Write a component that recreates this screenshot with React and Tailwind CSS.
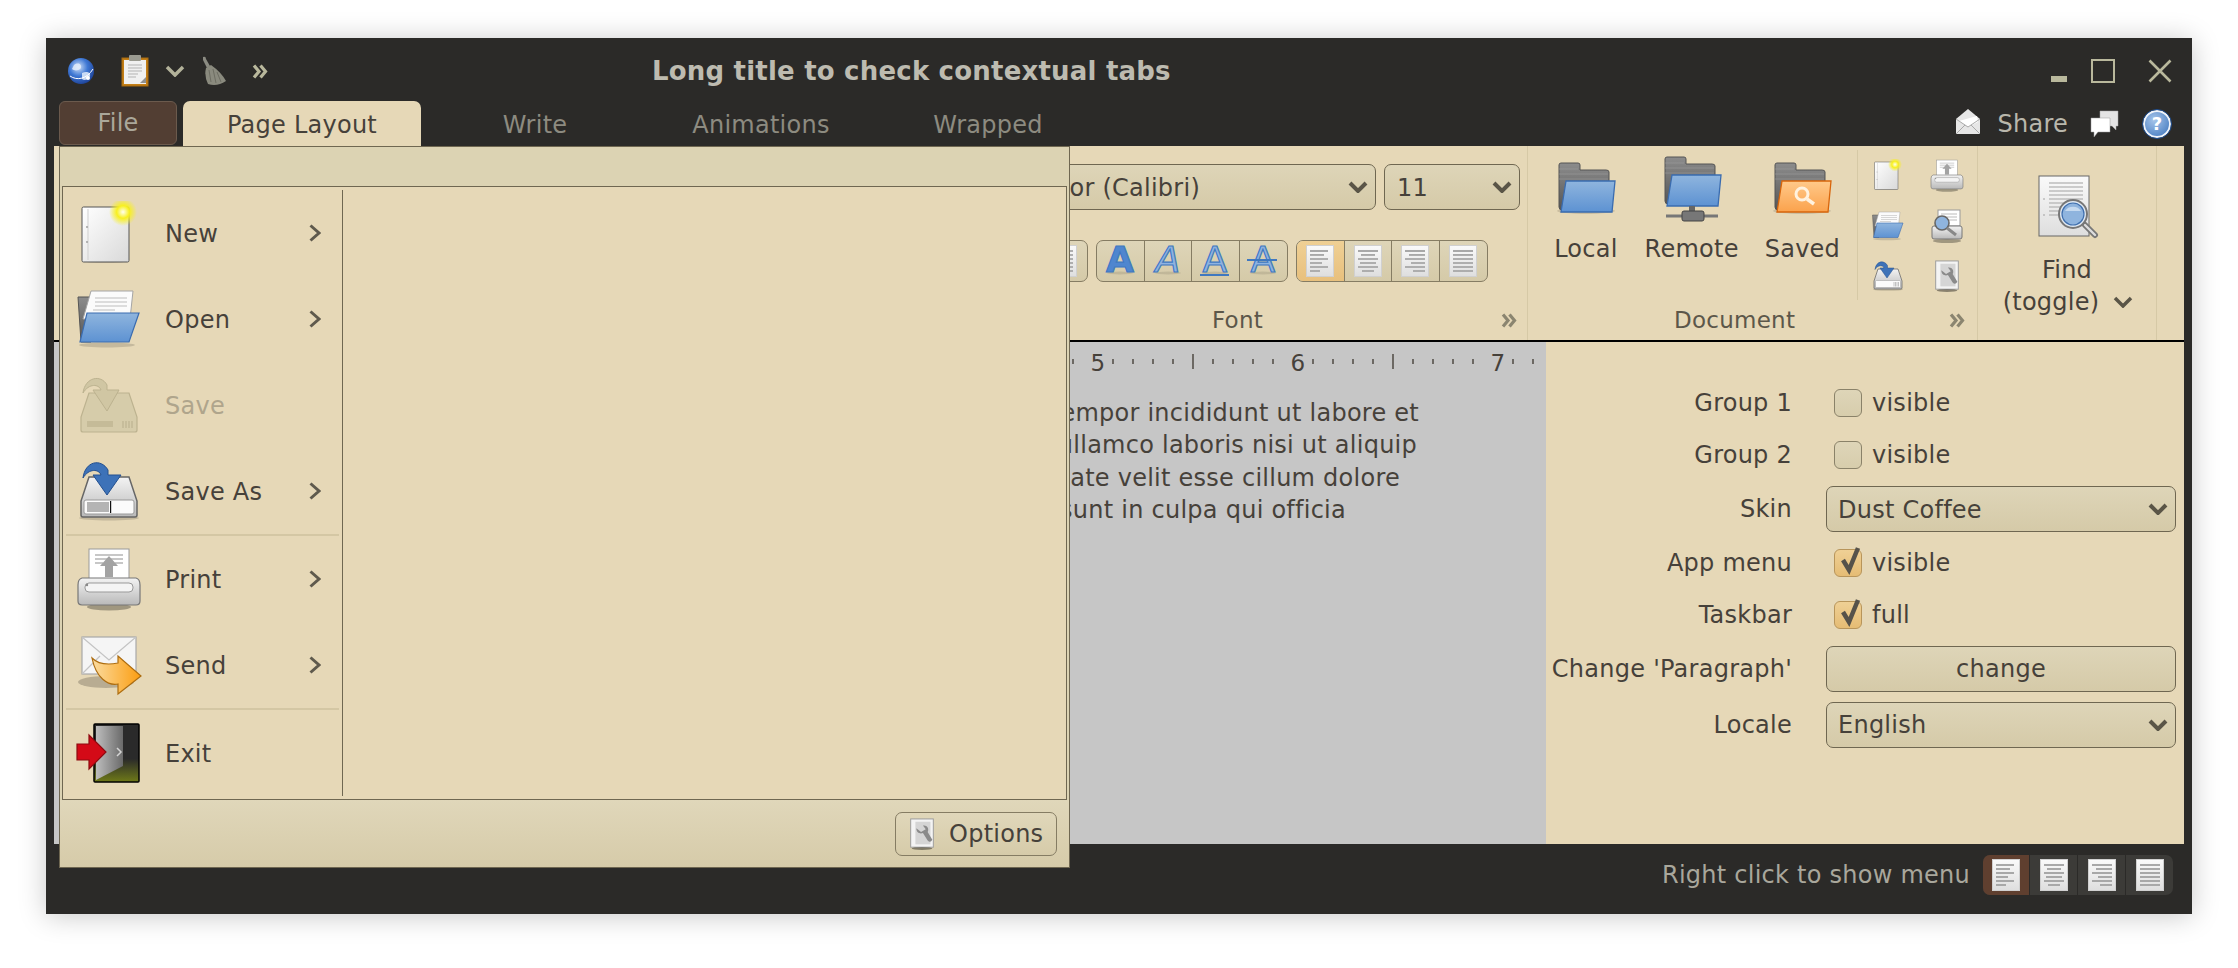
import React from 'react'

const DOC_LINES = [
  { text: 'tempor incididunt ut labore et', w: 'w-[1365px]' },
  { text: 'ullamco laboris nisi ut aliquip', w: 'w-[1363px]' },
  { text: 'voluptate velit esse cillum dolore', w: 'w-[1346px]' },
  { text: 'sunt in culpa qui officia', w: 'w-[1292px]' },
]

const Defs = () => (
  <svg width="0" height="0" className="absolute">
    <defs>
      <linearGradient id="paper" x1="0" y1="0" x2="1" y2="1">
        <stop offset="0" stopColor="#ffffff" />
        <stop offset="1" stopColor="#d9d9d9" />
      </linearGradient>
      <linearGradient id="paper2" x1="0" y1="0" x2="0" y2="1">
        <stop offset="0" stopColor="#fafafa" />
        <stop offset="1" stopColor="#dedede" />
      </linearGradient>
      <linearGradient id="blue" x1="0" y1="0" x2="0" y2="1">
        <stop offset="0" stopColor="#8fb5de" />
        <stop offset="1" stopColor="#5d92d2" />
      </linearGradient>
      <linearGradient id="grayf" x1="0" y1="0" x2="0" y2="1">
        <stop offset="0" stopColor="#8c8c8c" />
        <stop offset="1" stopColor="#555555" />
      </linearGradient>
      <linearGradient id="orange" x1="0" y1="0" x2="0" y2="1">
        <stop offset="0" stopColor="#ffc98a" />
        <stop offset="1" stopColor="#fba24c" />
      </linearGradient>
      <linearGradient id="arrowo" x1="0" y1="0" x2="1" y2="0">
        <stop offset="0" stopColor="#fbdca0" />
        <stop offset="1" stopColor="#fb9d10" />
      </linearGradient>
      <linearGradient id="driveg" x1="0" y1="0" x2="0" y2="1">
        <stop offset="0" stopColor="#f3f3f3" />
        <stop offset="1" stopColor="#b9b9b9" />
      </linearGradient>
      <linearGradient id="doorg" x1="0" y1="0" x2="1" y2="0">
        <stop offset="0" stopColor="#bdbdbd" />
        <stop offset="1" stopColor="#6a6a6a" />
      </linearGradient>
      <linearGradient id="floor" x1="0" y1="0" x2="0" y2="1">
        <stop offset="0.6" stopColor="#2a2a2a" />
        <stop offset="1" stopColor="#6f7a18" />
      </linearGradient>
      <radialGradient id="globe" cx="0.4" cy="0.35" r="0.7">
        <stop offset="0" stopColor="#cfe0f7" />
        <stop offset="0.5" stopColor="#3f78d4" />
        <stop offset="1" stopColor="#1c3f94" />
      </radialGradient>
      <radialGradient id="spark">
        <stop offset="0" stopColor="#fffff0" />
        <stop offset="0.45" stopColor="#f8f020" />
        <stop offset="1" stopColor="#f8f020" stopOpacity="0" />
      </radialGradient>
      <radialGradient id="helpb" cx="0.4" cy="0.35" r="0.8">
        <stop offset="0" stopColor="#a6c5ea" />
        <stop offset="1" stopColor="#3f76bd" />
      </radialGradient>
    </defs>
  </svg>
)

const Chevron = ({ className = 'w-5 h-3', color = '#5a5547', width = 4 }) => (
  <svg viewBox="0 0 20 12" className={className} fill="none">
    <path d="M2 2 L10 10 L18 2" stroke={color} strokeWidth={width} />
  </svg>
)

const Expand = ({ color = '#8b8570', className = 'w-[16px] h-[15px]' }) => (
  <svg viewBox="0 0 16 15" className={className} fill="none" stroke={color} strokeWidth="3.2">
    <path d="M2 1.5 L7 7.5 L2 13.5" />
    <path d="M8.5 1.5 L13.5 7.5 L8.5 13.5" />
  </svg>
)

const ChevronRight = () => (
  <svg viewBox="0 0 12 18" className="w-[12px] h-[18px]" fill="none">
    <path d="M1.5 1.5 L10 9 L1.5 16.5" stroke="#5f5a4d" strokeWidth="3" />
  </svg>
)

const NewIcon = ({ className = 'w-[64px] h-[64px]' }) => (
  <svg viewBox="0 0 64 64" className={className}>
    <ellipse cx="28" cy="60" rx="22" ry="2" fill="#000" opacity="0.12" />
    <rect x="5" y="6" width="47" height="55" rx="1.5" fill="url(#paper)" stroke="#555" strokeWidth="1" />
    <line x1="11" y1="8" x2="11" y2="59" stroke="#cfcfcf" />
    <circle cx="10" cy="26" r="0.9" fill="#999" />
    <circle cx="10" cy="41" r="0.9" fill="#999" />
    <circle cx="46" cy="11" r="14" fill="url(#spark)" />
  </svg>
)

const OpenIcon = ({ className = 'w-[68px] h-[60px]' }) => (
  <svg viewBox="0 0 68 60" className={className}>
    <ellipse cx="32" cy="56" rx="28" ry="2.5" fill="#000" opacity="0.14" />
    <path d="M3 8 H16 V53 H6 Z" fill="url(#grayf)" stroke="#555" />
    <path d="M16 2 H58 L55 30 H8 Z" fill="#fbfbfb" stroke="#a5a5a5" />
    <path d="M20 9 H52 M20 13 H52 M20 17 H52 M18 21 H40" stroke="#bdbdbd" strokeWidth="1.2" />
    <path d="M12 24 H64 L54 53 H5 Z" fill="url(#blue)" stroke="#3a6cb0" strokeWidth="1.2" />
  </svg>
)

const DriveIcon = ({ className = 'w-[64px] h-[60px]', disabled, detail }) => (
  <svg viewBox="0 0 64 60" className={className}>
    {disabled ? (
      <>
        <path d="M12 18 L4 42 V55 Q4 57 6 57 H58 Q60 57 60 55 V42 L52 18 Z" fill="#d6ccaa" stroke="#bcb28f" strokeWidth="1.2" />
        <rect x="10" y="46" width="26" height="6" fill="#c5bb98" />
        <path d="M46 46 V53 M49 46 V53 M52 46 V53 M55 46 V53" stroke="#b8ae8c" />
        <path d="M6 18 C8 2 24 -1 30 10 L30 15 H42 L30 36 L16 15 H24 C22 9 12 8 6 18 Z" fill="#d0c6a3" stroke="#bcb28f" />
      </>
    ) : (
      <>
        <ellipse cx="32" cy="57" rx="30" ry="2.5" fill="#000" opacity="0.15" />
        <path d="M12 16 L4 40 V54 Q4 56 6 56 H58 Q60 56 60 54 V40 L52 16 Z" fill="url(#driveg)" stroke="#666" strokeWidth="1.5" />
        <rect x="7" y="39" width="50" height="14" rx="2" fill="#fbfbfb" stroke="#999" />
        {detail ? (
          <>
            <rect x="10" y="41" width="22" height="10" fill="#b4b4b4" />
            <rect x="33" y="40" width="1.2" height="12" fill="#111" />
          </>
        ) : (
          <path d="M44 42 V51 M47 42 V51 M50 42 V51 M53 42 V51" stroke="#888" />
        )}
        <path d="M6 17 C8 0 24 -3 31 9 L31 14 H44 L30 34 L16 14 H24 C22 8 12 7 6 17 Z" fill="#3d72b8" stroke="#24508f" />
      </>
    )}
  </svg>
)

const PrintIcon = ({ className = 'w-[66px] h-[64px]' }) => (
  <svg viewBox="0 0 66 64" className={className}>
    <ellipse cx="33" cy="60" rx="22" ry="3.5" fill="#000" opacity="0.3" />
    <rect x="13" y="2" width="40" height="30" fill="#fff" stroke="#999" />
    <path d="M19 8 H47 M19 12 H47 M19 16 H27 M39 16 H47" stroke="#b5b5b5" strokeWidth="1.3" />
    <path d="M33 9 L42 19 H37 V30 H29 V19 H24 Z" fill="#a3a3a3" />
    <path d="M6 31 H60 Q64 32 64 38 V54 Q64 58 60 58 H6 Q2 58 2 54 V38 Q2 32 6 31 Z" fill="url(#driveg)" stroke="#777" strokeWidth="1.2" />
    <rect x="9" y="36" width="48" height="9" rx="4" fill="#f4f4f4" stroke="#999" />
    <circle cx="11" cy="38" r="1.2" fill="#888" />
  </svg>
)

const SendIcon = ({ className = 'w-[66px] h-[62px]' }) => (
  <svg viewBox="0 0 66 62" className={className}>
    <ellipse cx="30" cy="48" rx="28" ry="6" fill="#000" opacity="0.2" />
    <rect x="6" y="3" width="54" height="37" fill="#f5f5f5" stroke="#a8a8a8" strokeWidth="1.2" />
    <path d="M6 3 L33 26 L60 3 M6 40 L24 22 M60 40 L42 22" fill="none" stroke="#c4c4c4" strokeWidth="1.2" />
    <path d="M16 24 C22 30 32 31 42 29 V22 L65 42 L42 60 V50 C32 52 20 44 16 24 Z" fill="url(#arrowo)" stroke="#ad6d10" strokeWidth="1.2" />
  </svg>
)

const ExitIcon = () => (
  <svg viewBox="0 0 66 62" className="w-[66px] h-[62px]">
    <rect x="18" y="2" width="45" height="58" rx="1" fill="url(#floor)" stroke="#000" strokeWidth="1.5" />
    <path d="M20 4 H47 V44 L20 58 Z" fill="url(#doorg)" />
    <path d="M41 26 L45 30 L41 34" fill="none" stroke="#d5d5d5" strokeWidth="1.5" />
    <path d="M1 22 H13 V13 L30 30 L13 47 V38 H1 Z" fill="#d40a17" stroke="#8e0a10" strokeWidth="1.2" />
  </svg>
)

const FolderIcon = ({ front = 'url(#blue)', edge = '#3a6cb0', search }) => (
  <svg viewBox="0 0 64 56" className="w-[64px] h-[56px]">
    <ellipse cx="32" cy="51" rx="29" ry="3" fill="#000" opacity="0.12" />
    <path d="M5 5 Q5 3 7 3 H24 Q26 3 26 5 V10 H52 Q55 10 55 12 V50 H8 Q5 50 5 47 Z" fill="url(#grayf)" stroke="#555" />
    <path d="M5 9 H24 M5 14 H54 M5 19 H54" stroke="#a5a5a5" strokeWidth="0.8" opacity="0.6" />
    <path d="M12 21 H61 L58 52 H7 Z" fill={front} stroke={edge} strokeWidth="1.3" />
    {search && (
      <>
        <circle cx="32" cy="34" r="6" fill="none" stroke="#fff2df" strokeWidth="3" />
        <path d="M37 39 L44 44" stroke="#fff2df" strokeWidth="3.5" />
      </>
    )}
  </svg>
)

const RemoteIcon = () => (
  <svg viewBox="0 0 64 68" className="w-[64px] h-[68px]">
    <path d="M5 5 Q5 3 7 3 H24 Q26 3 26 5 V10 H52 Q55 10 55 12 V50 H8 Q5 50 5 47 Z" fill="url(#grayf)" stroke="#555" />
    <path d="M5 9 H24 M5 14 H54 M5 19 H54" stroke="#a5a5a5" strokeWidth="0.8" opacity="0.6" />
    <path d="M12 21 H61 L58 52 H7 Z" fill="url(#blue)" stroke="#3a6cb0" strokeWidth="1.3" />
    <rect x="29" y="52" width="6" height="7" fill="#666" />
    <path d="M6 62 H58" stroke="#777" strokeWidth="3" />
    <rect x="22" y="57" width="22" height="10" rx="2" fill="#777" stroke="#444" />
  </svg>
)

const FindIcon = () => (
  <svg viewBox="0 0 64 66" className="w-[64px] h-[66px]">
    <rect x="4" y="3" width="50" height="60" fill="url(#paper2)" stroke="#666" />
    <path d="M14 10 H48 M14 14 H48 M14 18 H48 M14 22 H48 M14 26 H48 M14 30 H36 M14 34 H32 M14 38 H30 M14 42 H30" stroke="#bdbdbd" strokeWidth="1.3" />
    <circle cx="9" cy="26" r="0.8" fill="#999" />
    <circle cx="9" cy="42" r="0.8" fill="#999" />
    <path d="M50 52 L60 62" stroke="#777" strokeWidth="6" strokeLinecap="round" />
    <path d="M50 52 L60 62" stroke="#ddd" strokeWidth="2.4" strokeLinecap="round" />
    <circle cx="38" cy="41" r="14" fill="#dfe8f2" stroke="#777" strokeWidth="2" />
    <circle cx="38" cy="41" r="11" fill="#8fb4de" stroke="#3f6fae" strokeWidth="1.2" />
    <path d="M30 38 A9 8 0 0 1 46 38 Z" fill="#c5d9ef" />
  </svg>
)

const PrintPreviewIcon = () => (
  <svg viewBox="0 0 34 34" className="w-[34px] h-[34px]">
    <ellipse cx="17" cy="32" rx="14" ry="2" fill="#000" opacity="0.3" />
    <rect x="8" y="1" width="22" height="16" fill="#fff" stroke="#999" />
    <path d="M11 5 H27 M11 8 H27 M11 11 H27" stroke="#bbb" />
    <rect x="2" y="17" width="30" height="13" rx="2" fill="url(#driveg)" stroke="#777" />
    <circle cx="12" cy="14" r="7" fill="#8fb4de" stroke="#666" strokeWidth="1.6" />
    <path d="M17 19 L26 26" stroke="#888" strokeWidth="3" />
  </svg>
)

const ToolsIcon = ({ className = 'w-[28px] h-[32px]' }) => (
  <svg viewBox="0 0 28 34" className={className}>
    <rect x="2" y="1" width="24" height="30" fill="#f4f4f4" stroke="#999" />
    <path d="M7 4 H23 V28 H7 Z" fill="#d5d5d5" />
    <path d="M8 11 C8 16 12 17 15 16 L20 24 Q23 27 25 23 L20 15 C22 11 19 7 15 8 L18 12 L13 15 Z" fill="#8a8a8a" />
    <ellipse cx="14" cy="32.5" rx="11" ry="1.5" fill="#000" opacity="0.4" />
  </svg>
)

const AlignDoc = ({ kind, className = 'w-[28px] h-[32px]' }) => {
  const rows = {
    left: [[4, 22], [4, 18], [4, 22], [4, 16], [4, 22], [4, 14]],
    center: [[4, 24], [7, 21], [4, 24], [6, 22], [4, 24], [8, 20]],
    right: [[4, 24], [8, 24], [4, 24], [10, 24], [4, 24], [12, 24]],
    justify: [[4, 24], [4, 24], [4, 24], [4, 24], [4, 24], [4, 24]],
  }[kind]
  return (
    <svg viewBox="0 0 28 32" className={className}>
      <rect x="0.5" y="0.5" width="27" height="31" fill="url(#paper2)" stroke="#d0d0d0" />
      {rows.map(([a, b], i) => (
        <line key={i} x1={a} x2={b} y1={6 + i * 4} y2={6 + i * 4} stroke="#a8a8a8" strokeWidth="1.8" />
      ))}
    </svg>
  )
}

const FontGlyph = ({ italic, underline, strike, bold }) => (
  <svg viewBox="0 0 36 34" className="w-[36px] h-[34px] overflow-visible">
    <ellipse cx="18" cy="29" rx="13" ry="1.5" fill="#000" opacity="0.1" />
    <text
      x="18"
      y="28"
      textAnchor="middle"
      fontSize="36"
      fontFamily="'DejaVu Sans', sans-serif"
      fontWeight={bold ? 700 : 400}
      fontStyle={italic ? 'italic' : 'normal'}
      fill={bold ? '#4f86cf' : '#8fb3e0'}
      stroke="#3f78c0"
      strokeWidth="1.2"
    >
      A
    </text>
    {underline && <rect x="3" y="30" width="29" height="2" fill="#3f78c0" />}
    {strike && <rect x="2" y="15" width="30" height="2" fill="#3f78c0" />}
  </svg>
)

const GlobeIcon = () => (
  <svg viewBox="0 0 28 28" className="w-[28px] h-[28px]">
    <circle cx="14" cy="14" r="13" fill="url(#globe)" />
    <path d="M7 8 C11 5 15 7 14 11 C12 14 7 14 5 12 Z M15 16 C19 14 24 15 23 19 C21 23 17 24 15 22 Z" fill="#e2ecfa" opacity="0.85" />
    <path d="M3 19 C10 24 20 22 26 12" fill="none" stroke="#fff" strokeWidth="1" />
    <circle cx="21" cy="21" r="2" fill="#fff" />
  </svg>
)

const ClipboardIcon = () => (
  <svg viewBox="0 0 28 32" className="w-[28px] h-[32px]">
    <rect x="1" y="3" width="26" height="28" fill="#c47f16" stroke="#a66a10" />
    <rect x="3" y="5" width="22" height="24" fill="#f0f0f0" />
    <rect x="8" y="0" width="12" height="6" rx="1" fill="#9a9a90" />
    <path d="M7 10 H21 M7 13 H21 M7 16 H21 M7 19 H17 M7 22 H15" stroke="#b3b3b3" />
    <path d="M19 28 L25 22 V28 Z" fill="#909090" />
  </svg>
)

const BroomIcon = () => (
  <svg viewBox="0 0 26 30" className="w-[26px] h-[30px]">
    <path d="M2 1 Q5 0 5 3 L9 10 L6 12 L2 4 Z" fill="#8b8b82" />
    <path d="M5 12 L10 9 Q20 16 25 25 Q16 31 7 28 Q3 20 5 12 Z" fill="#8a8a7e" />
    <path d="M8 14 L10 26 M12 13 L15 27 M16 16 L20 26" stroke="#6d6d62" />
  </svg>
)

const MailIcon = () => (
  <svg viewBox="0 0 26 28" className="w-[26px] h-[28px]">
    <path d="M1 11 L13 1 L25 11 V26 H1 Z" fill="#e6e6e6" />
    <path d="M4 13 L22 8 L23 14 L13 19 Z" fill="#fff" />
    <path d="M1 11 L13 19 L25 11 M1 26 L10 17 M25 26 L16 17" fill="none" stroke="#a9a9a9" />
  </svg>
)

const ChatIcon = () => (
  <svg viewBox="0 0 30 28" className="w-[30px] h-[28px]">
    <path d="M10 1 H28 V16 H26 L26 20 L22 16 H10 Z" fill="#e4e4e4" stroke="#aaa" strokeWidth="0.5" />
    <path d="M1 8 H20 V22 H8 L4 27 V22 H1 Z" fill="#fff" stroke="#999" strokeWidth="0.5" />
  </svg>
)

const HelpIcon = () => (
  <svg viewBox="0 0 30 30" className="w-[30px] h-[30px]">
    <circle cx="15" cy="15" r="13" fill="url(#helpb)" stroke="#f0f4fa" strokeWidth="2" />
    <circle cx="15" cy="15" r="14.5" fill="none" stroke="#1f4f92" />
    <text x="15" y="21" textAnchor="middle" fontSize="18" fontWeight="700" fontFamily="'DejaVu Sans', sans-serif" fill="#fff">?</text>
  </svg>
)

const Check = () => (
  <svg viewBox="0 0 24 30" className="absolute left-[3px] -top-[4px] w-[24px] h-[30px]" fill="none">
    <path d="M5 14 L11 24 L20 2" stroke="#56524a" strokeWidth="4.5" />
  </svg>
)

const Combo = ({ children, className = '' }) => (
  <div className={`flex items-center rounded-[7px] border border-[#6f6751] bg-gradient-to-b from-[#ded5b8] to-[#d5caa8] ${className}`}>
    {children}
  </div>
)

const MenuItem = ({ icon, label, arrow = true, disabled }) => (
  <div className="flex items-center h-[86px] pl-[11px] pr-[21px]">
    <div className="w-[70px] flex items-center justify-center shrink-0">{icon}</div>
    <span className={`ml-[21px] mt-[2px] flex-1 ${disabled ? 'text-[#afa58c]' : 'text-[#46413a]'}`}>{label}</span>
    {arrow && !disabled && <ChevronRight />}
  </div>
)

const Ruler = () => {
  const ticks = []
  for (let x = 19; x < 1492; x += 20) {
    const inch = (x + 1) % 200 === 40
    const major = (x + 1) % 200 === 140
    if (inch) continue
    ticks.push(<line key={x} x1={x} x2={x} y1={major ? 12 : 17} y2={major ? 27 : 22} stroke="#46413a" strokeWidth="1.4" />)
  }
  return (
    <svg width="1492" height="34" className="block shrink-0">
      {ticks}
      {[5, 6, 7].map((n) => (
        <text key={n} x={244 + (n - 1) * 200} y="29" textAnchor="middle" fontSize="23" fontFamily="'DejaVu Sans', sans-serif" fill="#46413a">
          {n}
        </text>
      ))}
    </svg>
  )
}

const FormLabel = ({ children }) => <div className="text-right pr-[34px] whitespace-nowrap">{children}</div>

const CheckRow = ({ checked, label }) => (
  <div className="flex items-center pl-[8px] h-[42px]">
    <div className={`relative w-[28px] h-[28px] rounded-[6px] border ${checked ? 'border-[#b8955a] bg-gradient-to-b from-[#efd095] to-[#e5bc74]' : 'border-[#8a8269] bg-gradient-to-b from-[#ded5b8] to-[#d7cdac]'}`}>
      {checked && <Check />}
    </div>
    <span className="ml-[10px]">{label}</span>
  </div>
)

export default function App() {
  return (
    <div className="relative w-[2238px] h-[968px] overflow-hidden bg-white font-['DejaVu_Sans',sans-serif] text-[24px] tracking-[0.25px] leading-[32px] text-[#46413a]">
      <Defs />
      <div className="absolute left-[46px] top-[38px] w-[2146px] h-[876px] flex flex-col bg-[#2b2a28] shadow-[0_2px_26px_rgba(0,0,0,0.22)]">
        {/* title bar */}
        <div className="flex items-center h-[60px] pt-[6px] shrink-0 text-[#c3c1b4]">
          <div className="flex items-center w-[240px] pl-[21px]">
            <GlobeIcon />
            <div className="ml-[26px]"><ClipboardIcon /></div>
            <div className="ml-[16px]"><Chevron color="#b3b29a" width={3.5} /></div>
            <div className="ml-[16px]"><BroomIcon /></div>
            <div className="ml-[25px]"><Expand color="#b9b89c" /></div>
          </div>
          <div className="ml-[366px] font-bold text-[#bdbbb0] whitespace-nowrap text-[26px] tracking-[0.2px]">Long title to check contextual tabs</div>
          <div className="flex-1" />
          <div className="w-[16px] h-[6px] mt-[16px] bg-[#b9b89c]" />
          <div className="ml-[24px] w-[24px] h-[24px] border-2 border-[#b9b89c]" />
          <svg viewBox="0 0 24 24" className="ml-[33px] mr-[20px] w-[24px] h-[24px]" fill="none" stroke="#b9b89c" strokeWidth="2.6">
            <path d="M1.5 1.5 L22.5 22.5 M22.5 1.5 L1.5 22.5" />
          </svg>
        </div>

        {/* tabs */}
        <div className="flex items-end h-[48px] shrink-0">
          <div className="ml-[13px] w-[118px] h-[44px] mb-[1px] rounded-[6px] border border-[#6b5a4d] bg-[#523e33] flex items-center justify-center text-[#aaa79a]">File</div>
          <div className="ml-[6px] w-[238px] h-[45px] pt-[2px] rounded-t-[7px] bg-[#e6d8b7] flex items-center justify-center text-[#46413a]">Page Layout</div>
          <div className="flex-1 flex items-center h-[45px] pt-[2px] text-[#8d8b80]">
            <span className="w-[228px] text-center">Write</span>
            <span className="w-[224px] text-center">Animations</span>
            <span className="w-[234px] text-center -ml-[2px]">Wrapped</span>
          </div>
          <div className="flex items-center h-[45px] mr-[20px]">
            <div className="-mt-[4px]"><MailIcon /></div>
            <span className="ml-[16px] text-[#b9b7ac]">Share</span>
            <div className="ml-[22px]"><ChatIcon /></div>
            <div className="ml-[22px]"><HelpIcon /></div>
          </div>
        </div>

        {/* ribbon */}
        <div className="mx-[8px] flex justify-end h-[196px] shrink-0 bg-[#e6d8b7] border-b-2 border-black pr-[27px]">
          <div className="flex-1 flex flex-col items-end border-r border-[#d6c9a6] pr-[7px]">
            <div className="flex gap-[8px] mt-[18px]">
              <Combo className="w-[400px] h-[46px] justify-end pr-[7px]">
                <span className="mr-[148px] mt-[1px] whitespace-nowrap">Minor (Calibri)</span>
                <Chevron />
              </Combo>
              <Combo className="w-[136px] h-[46px] justify-between pl-[12px] pr-[7px]">
                <span className="mt-[1px]">11</span>
                <Chevron />
              </Combo>
            </div>
            <div className="flex gap-[8px] mt-[30px] mr-[32px]">
              <div className="flex h-[42px] rounded-[7px] border border-[#857c63] bg-gradient-to-b from-[#ded5b8] to-[#d5caa8]">
                <div className="w-[48px] flex items-center justify-center"><AlignDoc kind="justify" /></div>
              </div>
              <div className="flex h-[42px] rounded-[7px] border border-[#857c63] bg-gradient-to-b from-[#ded5b8] to-[#d5caa8] divide-x divide-[#857c63]">
                <div className="w-[47.5px] flex items-center justify-center"><FontGlyph bold /></div>
                <div className="w-[47.5px] flex items-center justify-center"><FontGlyph italic /></div>
                <div className="w-[47.5px] flex items-center justify-center"><FontGlyph underline /></div>
                <div className="w-[47.5px] flex items-center justify-center"><FontGlyph strike /></div>
              </div>
              <div className="flex h-[42px] rounded-[7px] border border-[#857c63] bg-gradient-to-b from-[#ded5b8] to-[#d5caa8] divide-x divide-[#857c63] overflow-hidden">
                <div className="w-[47.5px] flex items-center justify-center bg-gradient-to-b from-[#efd095] to-[#e8c07d]"><AlignDoc kind="left" /></div>
                <div className="w-[47.5px] flex items-center justify-center"><AlignDoc kind="center" /></div>
                <div className="w-[47.5px] flex items-center justify-center"><AlignDoc kind="right" /></div>
                <div className="w-[47.5px] flex items-center justify-center"><AlignDoc kind="justify" /></div>
              </div>
            </div>
            <div className="relative self-stretch mt-[21px] h-[34px] flex items-center justify-end text-[#5c574a] text-[23px]">
              <span className="mr-[257px]">Font</span>
              <div className="absolute right-[3px] top-[10px]"><Expand /></div>
            </div>
          </div>

          <div className="w-[450px] shrink-0 flex flex-col border-r border-[#d6c9a6]">
            <div className="flex h-[156px] pl-[8px]">
              <div className="w-[100px] flex flex-col items-center pt-[8px]">
                <div className="h-[68px] flex items-center"><FolderIcon /></div>
                <span className="mt-[11px]">Local</span>
              </div>
              <div className="w-[112px] flex flex-col items-center pt-[8px]">
                <div className="h-[68px] flex items-center"><RemoteIcon /></div>
                <span className="mt-[11px]">Remote</span>
              </div>
              <div className="w-[110px] flex flex-col items-center pt-[8px]">
                <div className="h-[68px] flex items-center"><FolderIcon front="url(#orange)" edge="#d8650b" search /></div>
                <span className="mt-[11px]">Saved</span>
              </div>
              <div className="grid grid-cols-2 w-[120px] border-l border-[#d6c9a6] h-[150px] mt-[4px]">
                <div className="flex items-center justify-center"><NewIcon className="w-[32px] h-[32px]" /></div>
                <div className="flex items-center justify-center"><PrintIcon className="w-[34px] h-[33px]" /></div>
                <div className="flex items-center justify-center"><OpenIcon className="w-[34px] h-[30px]" /></div>
                <div className="flex items-center justify-center"><PrintPreviewIcon /></div>
                <div className="flex items-center justify-center"><DriveIcon className="w-[32px] h-[30px]" /></div>
                <div className="flex items-center justify-center"><ToolsIcon /></div>
              </div>
            </div>
            <div className="relative h-[36px] flex items-center text-[#5c574a] text-[23px] pl-[146px]">
              <span>Document</span>
              <div className="absolute right-[12px] top-[11px]"><Expand /></div>
            </div>
          </div>

          <div className="w-[179px] shrink-0 flex flex-col items-center border-r border-[#d6c9a6] pt-[27px]">
            <FindIcon />
            <span className="mt-[15px] leading-[32px]">Find</span>
            <span className="flex items-center leading-[32px] ml-[2px]">
              (toggle)
              <span className="ml-[14px]"><Chevron className="w-[20px] h-[12px]" width={3.5} /></span>
            </span>
          </div>
        </div>

        {/* document + form */}
        <div className="mx-[8px] flex h-[502px] shrink-0">
          <div className="w-[1492px] shrink-0 bg-[#c6c6c6] overflow-hidden">
            <Ruler />
            <div className="pt-[21px] flex flex-col leading-[32.3px]">
              {DOC_LINES.map((line) => (
                <div key={line.w} className={`${line.w} flex justify-end whitespace-nowrap`}>{line.text}</div>
              ))}
            </div>
          </div>
          <div className="flex-1 bg-[#e6d8b7] pt-[40px]">
            <div className="grid grid-cols-[280px_350px] gap-y-[10px] items-center">
              <FormLabel>Group 1</FormLabel>
              <CheckRow label="visible" />
              <FormLabel>Group 2</FormLabel>
              <CheckRow label="visible" />
              <FormLabel>Skin</FormLabel>
              <Combo className="h-[46px] justify-between pl-[11px] pr-[7px]">
                <span className="mt-[1px]">Dust Coffee</span>
                <Chevron />
              </Combo>
              <FormLabel>App menu</FormLabel>
              <CheckRow checked label="visible" />
              <FormLabel>Taskbar</FormLabel>
              <CheckRow checked label="full" />
              <FormLabel>Change 'Paragraph'</FormLabel>
              <Combo className="h-[46px] justify-center">change</Combo>
              <FormLabel>Locale</FormLabel>
              <Combo className="h-[46px] justify-between pl-[11px] pr-[7px]">
                <span>English</span>
                <Chevron />
              </Combo>
            </div>
          </div>
        </div>

        {/* status bar */}
        <div className="flex-1 flex items-center justify-end pr-[19px] pb-[8px] text-[#a9a79c]">
          <span className="mr-[13px] whitespace-nowrap">Right click to show menu</span>
          <div className="flex h-[40px] rounded-[7px] overflow-hidden bg-[#3c3b38] divide-x divide-[#2b2a28]">
            <div className="w-[47px] flex items-center justify-center bg-[#5f3f2f]"><AlignDoc kind="left" /></div>
            <div className="w-[48px] flex items-center justify-center"><AlignDoc kind="center" /></div>
            <div className="w-[48px] flex items-center justify-center"><AlignDoc kind="right" /></div>
            <div className="w-[47px] flex items-center justify-center"><AlignDoc kind="justify" /></div>
          </div>
        </div>

        {/* application menu, open over the ribbon */}
        <div className="absolute left-[13px] top-[108px] w-[1011px] h-[722px] flex flex-col border border-[#6f6751] bg-[#dcd3b3]">
          <div className="h-[39px] shrink-0" />
          <div className="mx-[2px] h-[614px] shrink-0 flex border border-[#6f6751] bg-[#e6d8b7]">
            <div className="w-[280px] shrink-0 flex flex-col my-[3px] border-r border-[#6f6751]">
              <MenuItem icon={<NewIcon />} label="New" />
              <MenuItem icon={<OpenIcon />} label="Open" />
              <MenuItem icon={<DriveIcon disabled />} label="Save" disabled />
              <MenuItem icon={<DriveIcon detail />} label="Save As" />
              <div className="mx-[3px] h-[2px] bg-[#d4c7a4]" />
              <MenuItem icon={<PrintIcon />} label="Print" />
              <MenuItem icon={<SendIcon />} label="Send" />
              <div className="mx-[3px] h-[2px] bg-[#d4c7a4]" />
              <MenuItem icon={<ExitIcon />} label="Exit" arrow={false} />
            </div>
          </div>
          <div className="flex-1 flex items-center justify-end pr-[12px] bg-gradient-to-b from-[#e0d7ba] to-[#d6cba9]">
            <div className="w-[162px] h-[44px] rounded-[7px] border border-[#857c63] flex items-center pl-[12px] bg-gradient-to-b from-[#e0d7ba] to-[#d6cba9]">
              <ToolsIcon />
              <span className="ml-[13px]">Options</span>
            </div>
          </div>
        </div>
      </div>
    </div>
  )
}
